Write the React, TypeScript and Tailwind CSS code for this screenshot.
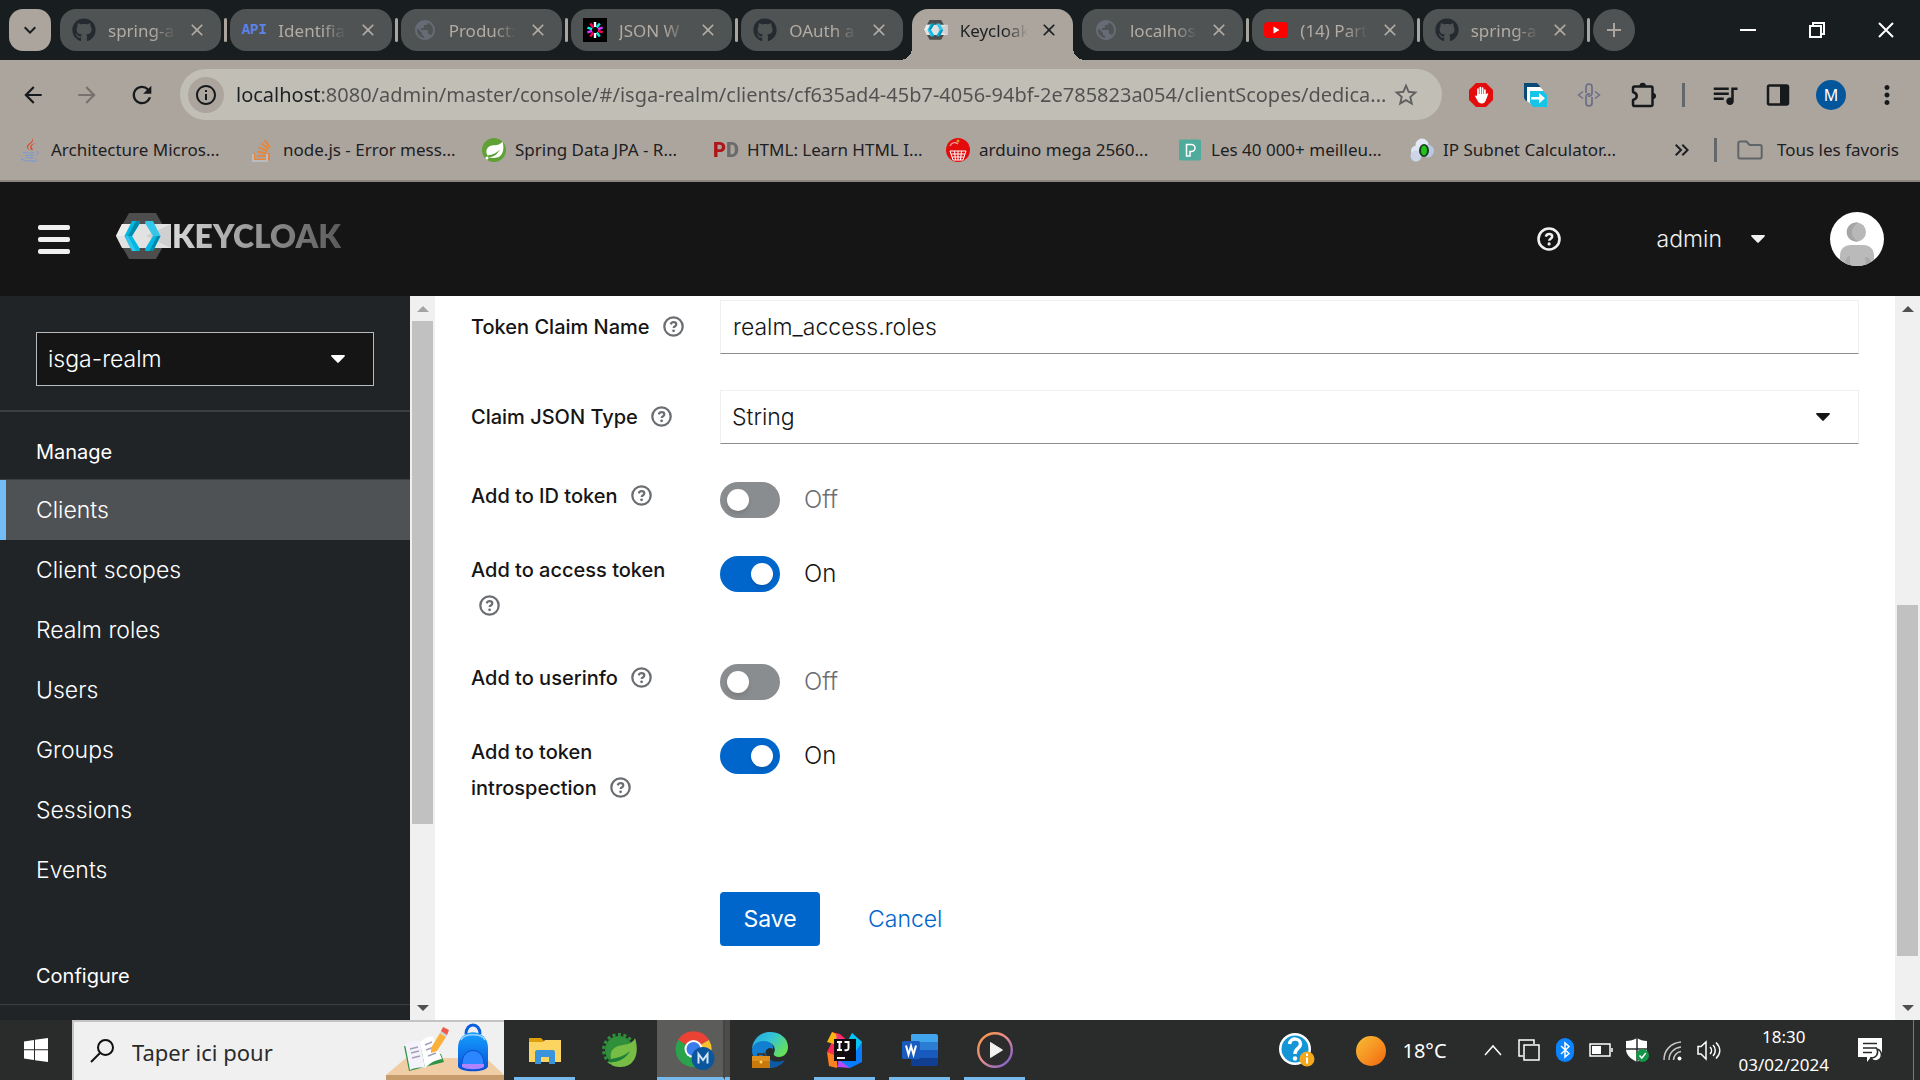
import { useState } from "react";
import type { ReactNode } from "react";
import { FaGithub, FaJava, FaStackOverflow } from "react-icons/fa";
import {
  MdArrowBack,
  MdArrowForward,
  MdRefresh,
  MdStarOutline,
  MdInfoOutline,
  MdQueueMusic,
  MdMoreVert,
  MdPublic,
  MdClose,
  MdAdd,
  MdKeyboardArrowDown,
  MdKeyboardDoubleArrowRight,
} from "react-icons/md";

const SYSTEM = "font-['Noto_Sans','Open_Sans',sans-serif]";
const CONSOLE = "font-['Inter','Liberation_Sans',sans-serif]";

function KeycloakMark({ className }: { className: string }) {
  return (
    <svg viewBox="0 0 56 46" className={className} aria-hidden="true">
      <path d="M13 0H40L53 23 40 46H13L0 23Z" fill="#4d4d4d" />
      <path d="M6 11H55V35H6L0 23Z" fill="#e2e2e2" />
      <path d="M30 23L55 11V35Z" fill="#d0d0d0" />
      <path d="M6 11H20L12 23H0Z" fill="#ededed" />
      <path d="M16 8H23.500L24 10 16 23H8.500Z" fill="#00b8e3" />
      <path d="M8.500 23H16L24 36 23.500 38H16Z" fill="#00b8e3" />
      <path d="M23.500 8L24 10 16 23 12 23 20 8Z" fill="#008aaa" />
      <path d="M8.500 23H12L20 38H16Z" fill="#33c6e9" />
      <path d="M29.500 8H37L44.500 23H37L29 10Z" fill="#33c6e9" />
      <path d="M37 23H44.500L37 38H29.500L29 36Z" fill="#00b8e3" />
      <path d="M41 23H44.500L37 38H33.500Z" fill="#008aaa" />
    </svg>
  );
}

function JwtIcon() {
  const colors = ["#fff", "#00f2e6", "#d63aff", "#fb015b", "#00f2e6", "#fff", "#fb015b", "#d63aff", "#00f2e6", "#fb015b"];
  return (
    <svg viewBox="0 0 24 24" className="size-6 bg-black" aria-hidden="true">
      {colors.map((c, i) => (
        <path key={i} d="M12 4v5" stroke={c} strokeWidth="2.400" transform={`rotate(${i * 36} 12 12)`} />
      ))}
    </svg>
  );
}

function YoutubeIcon() {
  return (
    <svg viewBox="0 0 24 24" className="size-6" aria-hidden="true">
      <rect x="0" y="4" width="24" height="16" rx="4" fill="#f00" />
      <path d="M9.500 8.500v7l6-3.500z" fill="#fff" />
    </svg>
  );
}

function ApiIcon() {
  return <span className="font-['Liberation_Mono',monospace] text-sm leading-6 font-bold text-[#5b84e8]">API</span>;
}

type TabInfo = { title: string; icon: ReactNode; active?: boolean };

const github = <FaGithub className="size-6 text-[#242a30]" />;
const globe = <MdPublic className="size-6 text-[#666b75]" />;

const tabs: TabInfo[] = [
  { title: "spring-a", icon: github },
  { title: "Identifia", icon: <ApiIcon /> },
  { title: "Product:", icon: globe },
  { title: "JSON W", icon: <JwtIcon /> },
  { title: "OAuth a", icon: github },
  { title: "Keycloak", icon: <KeycloakMark className="w-6" />, active: true },
  { title: "localhos", icon: globe },
  { title: "(14) Part", icon: <YoutubeIcon /> },
  { title: "spring-a", icon: github },
];

function Tab({ title, icon, active }: TabInfo) {
  return (
    <div
      className={
        active
          ? "relative flex h-[51px] min-w-0 flex-1 items-center self-end rounded-t-2xl bg-[#aca59d] pb-[9px] text-[#1d2023]"
          : "flex h-[42px] min-w-0 flex-1 items-center rounded-2xl bg-[#505353] text-[#b3aca4]"
      }
    >
      {active && (
        <>
          <span className="absolute bottom-0 -left-3 size-3 bg-[radial-gradient(circle_at_0_0,transparent_12px,#aca59d_12px)]" />
          <span className="absolute -right-3 bottom-0 size-3 bg-[radial-gradient(circle_at_100%_0,transparent_12px,#aca59d_12px)]" />
        </>
      )}
      <button type="button" className="flex min-w-0 flex-1 items-center gap-3 pl-3 text-left">
        <span className="flex w-6 shrink-0 justify-center">{icon}</span>
        <span className="w-[68px] overflow-hidden [mask-image:linear-gradient(90deg,#000_66%,transparent)] pt-0.5 text-[17px] leading-6 whitespace-nowrap">
          {title}
        </span>
      </button>
      <button type="button" aria-label={`Fermer ${title}`} className="mr-3.5">
        <MdClose className="size-5" />
      </button>
    </div>
  );
}

function TabStrip() {
  return (
    <div className="flex h-[60px] items-center bg-[#181e20] pl-[9px]">
      <button
        type="button"
        aria-label="Rechercher dans les onglets"
        className="mr-[9px] flex size-[42px] shrink-0 items-center justify-center rounded-[14px] bg-[#aca59d] text-[#181e20]"
      >
        <MdKeyboardArrowDown className="size-6" />
      </button>
      <div className="flex h-[60px] max-w-[1524px] flex-1 items-center">
        {tabs.map((tab, i) => {
          const plain = i === 0 || tab.active || tabs[i - 1].active;
          return [
            i > 0 && (
              <span key={`s${i}`} className={plain ? "w-[9px] shrink-0" : "mx-[3px] h-6 w-[3px] shrink-0 rounded-full bg-[#aca59d]"} />
            ),
            <Tab key={i} {...tab} />,
          ];
        })}
      </div>
      <span className="mx-[3px] h-6 w-[3px] shrink-0 rounded-full bg-[#aca59d]" />
      <button
        type="button"
        aria-label="Nouvel onglet"
        className="flex size-[42px] shrink-0 items-center justify-center rounded-full bg-[#505353] text-[#aca59d]"
      >
        <MdAdd className="size-6" />
      </button>
      <div className="ml-auto flex text-white">
        <button type="button" aria-label="Réduire" className="flex w-[69px] justify-center">
          <svg viewBox="0 0 16 16" className="size-4" stroke="currentColor" strokeWidth="2" aria-hidden="true">
            <path d="M0 8h16" />
          </svg>
        </button>
        <button type="button" aria-label="Restaurer" className="flex w-[69px] justify-center">
          <svg viewBox="0 0 16 16" className="size-4" fill="none" stroke="currentColor" strokeWidth="2" aria-hidden="true">
            <path d="M1 4h11v11H1zM4 4V1h11v11h-3" />
          </svg>
        </button>
        <button type="button" aria-label="Fermer" className="flex w-[69px] justify-center">
          <svg viewBox="0 0 16 16" className="size-4" stroke="currentColor" strokeWidth="2" aria-hidden="true">
            <path d="M1 1l14 14M15 1L1 15" />
          </svg>
        </button>
      </div>
    </div>
  );
}

function StopHand() {
  return (
    <svg viewBox="0 0 24 24" className="size-6" aria-hidden="true">
      <path d="M7 0h10l7 7v10l-7 7H7l-7-7V7z" fill="#e40d0d" />
      <path
        d="M9 13V6M11.300 12V4.500M13.600 12V5M15.900 13V7"
        stroke="#fff"
        strokeWidth="1.700"
        strokeLinecap="round"
      />
      <path d="M8.200 11h8.600l1.700-.8c.8 0 .8.8.5 1.500L16.500 18c-.8 1.700-2 2.500-3.500 2.500-2.300 0-3.500-1-4.300-2.500l-2.500-4.500c-.4-1 .7-1.500 2-.5z" fill="#fff" />
    </svg>
  );
}

function ShareArrow() {
  return (
    <svg viewBox="0 0 24 24" className="size-6" aria-hidden="true">
      <path d="M1 0h13l3 3v2H5v13H3l-2-3z" fill="#0a4a77" />
      <path d="M4 4h13l3 3v5H8v9l-4-3z" fill="#fff" />
      <path d="M7 8h13l4 4v12H10l-3-4z" fill="#14c5e8" />
      <path d="M8 14h8v-4l6 5.200-6 5.200v-4H8z" fill="#fff" />
    </svg>
  );
}

function ChainIcon() {
  return (
    <svg viewBox="0 0 24 24" className="size-6" fill="none" stroke="#6b6d86" strokeWidth="1.700" aria-hidden="true">
      <path d="M9 10V4a3 3 0 0 1 6 0v6a3 3 0 0 1-4 3" />
      <path d="M15 14v6a3 3 0 0 1-6 0v-6a3 3 0 0 1 4-3" />
      <path d="M6 8.500L1.500 12 6 15.500M18 8.500l4.500 3.500-4.500 3.500" strokeWidth="1.400" />
    </svg>
  );
}

function PuzzleIcon() {
  return (
    <svg viewBox="0 0 26 26" className="size-[26px]" aria-hidden="true">
      <path
        d="M3.500 4.500H20a1.500 1.500 0 0 1 1.500 1.500v16.500a1.500 1.500 0 0 1-1.500 1.500H3a1.500 1.500 0 0 1-1-1.500v-4.500c5-1.500 5-6.500 0-8V6a1.500 1.500 0 0 1 1.500-1.500z"
        fill="none"
        stroke="currentColor"
        strokeWidth="2.500"
        strokeLinejoin="round"
      />
      <path d="M8.500 4a3.200 3.200 0 0 1 6.400 0zM22 11a3 3 0 0 1 0 6z" fill="currentColor" />
    </svg>
  );
}

function SidePanelIcon() {
  return (
    <svg viewBox="0 0 24 24" className="size-6" aria-hidden="true">
      <rect x="2" y="2.500" width="20" height="19" rx="1.500" fill="none" stroke="#171a1c" strokeWidth="2.500" />
      <path d="M14 2h8v20h-8z" fill="#171a1c" />
    </svg>
  );
}

function Toolbar() {
  return (
    <div className="flex h-[69px] items-center bg-[#aca59d] pr-[18px] pl-5 text-[#171a1c]">
      <div className="flex w-40 shrink-0 items-center gap-7">
        <button type="button" aria-label="Retour">
          <MdArrowBack className="size-[26px]" />
        </button>
        <button type="button" aria-label="Avancer" className="text-[#77726d]">
          <MdArrowForward className="size-[26px]" />
        </button>
        <button type="button" aria-label="Actualiser">
          <MdRefresh className="size-7" />
        </button>
      </div>
      <div className="flex h-[51px] min-w-0 flex-1 items-center rounded-full bg-[#c1beb6] pr-[22px] pl-2">
        <button
          type="button"
          aria-label="Informations sur le site"
          className="flex size-9 shrink-0 items-center justify-center rounded-full bg-[#aca59d]"
        >
          <MdInfoOutline className="size-6" />
        </button>
        <input
          type="text"
          aria-label="Adresse"
          readOnly
          value="localhost:8080/admin/master/console/#/isga-realm/clients/cf635ad4-45b7-4056-94bf-2e785823a054/clientScopes/dedica..."
          className="ml-3 min-w-0 flex-1 bg-[linear-gradient(90deg,#1d2023_84px,#50504f_84px)] bg-clip-text text-xl text-transparent outline-none"
        />
        <button type="button" aria-label="Ajouter aux favoris" className="text-[#5f6060]">
          <MdStarOutline className="size-7" />
        </button>
      </div>
      <div className="ml-[27px] flex shrink-0 items-center gap-[30px]">
        <button type="button" aria-label="Bloqueur de publicité"><StopHand /></button>
        <button type="button" aria-label="Partager la page"><ShareArrow /></button>
        <button type="button" aria-label="Liens"><ChainIcon /></button>
        <button type="button" aria-label="Extensions"><PuzzleIcon /></button>
      </div>
      <span className="mx-[25px] h-6 w-[3px] shrink-0 bg-[#62686a]" />
      <div className="flex shrink-0 items-center gap-[26px]">
        <button type="button" aria-label="Commandes multimédias"><MdQueueMusic className="size-[30px]" /></button>
        <button type="button" aria-label="Panneau latéral"><SidePanelIcon /></button>
        <button type="button" aria-label="Profil M" className="flex size-[30px] items-center justify-center rounded-full bg-[#02569c] text-base text-white">
          M
        </button>
        <button type="button" aria-label="Menu"><MdMoreVert className="size-[30px]" /></button>
      </div>
    </div>
  );
}

function SpringLeaf() {
  return (
    <svg viewBox="0 0 24 24" className="size-6" aria-hidden="true">
      <circle cx="12" cy="12" r="12" fill="#5fa134" />
      <path d="M20.500 3.500c1.500 5 1.500 12-3 15-3.500 2.200-8 1.200-12 1 6 .3 10-3.500 12.500-8C14.500 15 11 16.500 5.500 17.500 2.500 12 6 8 10 7.500c4.500-.5 8-.5 10.500-4z" fill="#fff" />
      <circle cx="5" cy="20" r="1.500" fill="#fff" />
    </svg>
  );
}

function PdIcon() {
  return (
    <span className="bg-[linear-gradient(90deg,#b0151b_50%,#6b6b6b_50%)] bg-clip-text font-['Roboto',sans-serif] text-xl leading-6 font-black text-transparent">
      PD
    </span>
  );
}

function CherryIcon() {
  return (
    <svg viewBox="0 0 24 24" className="size-6" aria-hidden="true">
      <circle cx="12" cy="12" r="12" fill="#e30b0b" />
      <path d="M4 13h16l-3 9H7zM8.500 13l1 9M12 13v9M15.500 13l-1 9M5 16h14M6 19h12" fill="none" stroke="#fff" strokeWidth="1" />
      <path d="M4 8c2-4 5-4 8-2" fill="none" stroke="#f8a5a5" strokeWidth="1.200" />
      <circle cx="12" cy="3" r="1.500" fill="#c9a52c" />
    </svg>
  );
}

function PexelsIcon() {
  return (
    <svg viewBox="0 0 24 24" className="size-6" aria-hidden="true">
      <rect x="1" y="1.500" width="22" height="21" rx="2" fill="#4fab9c" />
      <path d="M8.500 18V6.500h5a3.500 3.500 0 0 1 0 7h-1.500V18z" fill="none" stroke="#fff" strokeWidth="1.500" />
    </svg>
  );
}

function SubnetIcon() {
  return (
    <svg viewBox="0 0 24 24" className="size-6" aria-hidden="true">
      <circle cx="12" cy="7" r="6.500" fill="#e3eaf7" />
      <circle cx="17.500" cy="13" r="6.500" fill="#b9c8e4" />
      <circle cx="6.500" cy="13" r="5.500" fill="#dfe7f5" />
      <circle cx="6" cy="18" r="5.500" fill="#ccd6e8" />
      <ellipse cx="14" cy="12.500" rx="5" ry="6.500" fill="#1b3a1e" />
      <ellipse cx="14" cy="12.500" rx="3" ry="5" fill="#22c31c" />
    </svg>
  );
}

function StackIcon() {
  return (
    <span className="relative flex">
      <FaStackOverflow className="size-6 text-[#e8853a]" />
      <span className="absolute bottom-0 left-0.5 h-2 w-4 border-2 border-t-0 border-[#b9bdc0]" />
    </span>
  );
}

const bookmarks: { title: string; icon: ReactNode }[] = [
  {
    title: "Architecture Micros...",
    icon: <FaJava className="size-6 [&_path]:fill-[url(#java-tone)]" />,
  },
  { title: "node.js - Error mess...", icon: <StackIcon /> },
  { title: "Spring Data JPA - R...", icon: <SpringLeaf /> },
  { title: "HTML: Learn HTML I...", icon: <PdIcon /> },
  { title: "arduino mega 2560...", icon: <CherryIcon /> },
  { title: "Les 40 000+ meilleu...", icon: <PexelsIcon /> },
  { title: "IP Subnet Calculator...", icon: <SubnetIcon /> },
];

function BookmarkBar() {
  return (
    <div className="flex h-[53px] items-center border-b-2 border-[#8a857f] bg-[#aca59d] pr-[21px] pb-2.5 pl-[18px] text-[17px] text-[#1d2023]">
      <svg className="size-0" aria-hidden="true">
        <linearGradient id="java-tone" x1="0" y1="0" x2="0" y2="1">
          <stop offset="0.52" stopColor="#d9472b" />
          <stop offset="0.52" stopColor="#7196d8" />
        </linearGradient>
      </svg>
      {bookmarks.map((b) => (
        <a key={b.title} href="#" className="flex w-[232px] items-center gap-[9px] whitespace-nowrap">
          <span className="flex w-6 shrink-0 justify-center">{b.icon}</span>
          {b.title}
        </a>
      ))}
      <div className="ml-auto flex items-center whitespace-nowrap">
        <button type="button" aria-label="Autres favoris">
          <MdKeyboardDoubleArrowRight className="size-6" />
        </button>
        <span className="mx-5 h-6 w-[3px] bg-[#62686a]" />
        <button type="button" className="flex items-center gap-3.5">
          <svg viewBox="0 0 26 20" className="w-[26px] text-[#5f6568]" aria-hidden="true">
            <path
              d="M3 1.500h6.500l3 3.500H23a1.700 1.700 0 0 1 1.700 1.700v10A1.700 1.700 0 0 1 23 18.500H3a1.700 1.700 0 0 1-1.700-1.700V3.200A1.700 1.700 0 0 1 3 1.500z"
              fill="none"
              stroke="currentColor"
              strokeWidth="2"
            />
          </svg>
          Tous les favoris
        </button>
      </div>
    </div>
  );
}

function HelpGlyph({ className }: { className: string }) {
  return (
    <svg viewBox="0 0 24 24" className={className} fill="none" stroke="currentColor" aria-hidden="true">
      <circle cx="12" cy="12" r="10.500" strokeWidth="2.600" />
      <path d="M8.800 9.600c.5-1.700 1.700-2.500 3.300-2.500 1.800 0 3.100 1 3.100 2.500 0 2.200-3 2-3 4.200" strokeWidth="2.500" />
      <circle cx="12.100" cy="16.900" r="1.600" fill="currentColor" stroke="none" />
    </svg>
  );
}

function Caret({ className }: { className: string }) {
  return (
    <svg viewBox="0 0 14 8" className={className} aria-hidden="true">
      <path d="M1 0h12c.9 0 1.200 1 .6 1.500L7.700 7.600c-.4.4-1 .4-1.400 0L.4 1.500C-.2 1 .1 0 1 0z" fill="currentColor" />
    </svg>
  );
}

function Masthead() {
  return (
    <header className="flex h-[114px] shrink-0 items-center bg-[#151515] pr-9 pl-[38px] text-[#f0f0f0]">
      <button type="button" aria-label="Global navigation" className="flex w-8 flex-col gap-[7px]">
        <span className="h-[5px] rounded-xs bg-[#f0f0f0]" />
        <span className="h-[5px] rounded-xs bg-[#f0f0f0]" />
        <span className="h-[5px] rounded-xs bg-[#f0f0f0]" />
      </button>
      <a href="#" aria-label="Keycloak" className="ml-[46px] flex items-center pb-1.5">
        <KeycloakMark className="w-14" />
        <span className="bg-linear-to-r from-[#d8d8d8] to-[#5a5a5a] bg-clip-text font-['Lato',sans-serif] text-[32px] leading-10 font-extrabold text-transparent">
          KEYCLOAK
        </span>
      </a>
      <button type="button" aria-label="Help" className="ml-auto">
        <HelpGlyph className="size-6" />
      </button>
      <button type="button" className="ml-24 flex items-center gap-[29px] text-[23px] font-light">
        admin
        <Caret className="w-3.5" />
      </button>
      <svg viewBox="0 0 54 54" className="ml-[65px] size-[54px] rounded-full bg-white" role="img" aria-label="Avatar">
        <circle cx="26.500" cy="20" r="9.500" fill="#b8b8b8" />
        <path d="M26.500 10.500a9.500 9.500 0 1 0 2 18.700C20 27 20 14 28.500 10.800z" fill="#a5a5a5" />
        <path d="M10 54V44c0-7 4-11 11-11h12c7 0 11 4 11 11v10z" fill="#bababa" />
        <path d="M15 54c0-6 1-9 5-10v10zM35 45c5 0 6 3 6 9h-5z" fill="#a9a9a9" />
      </svg>
    </header>
  );
}

function Arrow({ up, muted }: { up?: boolean; muted?: boolean }) {
  return (
    <div className={muted ? "flex h-[25px] items-center justify-center text-[#a3a3a3]" : "flex h-[25px] items-center justify-center text-[#505050]"}>
      <svg viewBox="0 0 12 6" className="w-3" aria-hidden="true">
        <path d={up ? "M6 0l6 6H0z" : "M0 0h12L6 6z"} fill="currentColor" />
      </svg>
    </div>
  );
}

const manageItems = ["Clients", "Client scopes", "Realm roles", "Users", "Groups", "Sessions", "Events"];

function Sidebar() {
  return (
    <div className="flex w-[435px] shrink-0">
      <nav aria-label="Global" className="flex-1 bg-[#212427] text-[23px] text-white">
        <div className="border-b-2 border-[#3c3f42] px-9 pt-9 pb-6">
          <div className="relative">
            <select
              aria-label="Realm"
              defaultValue="isga-realm"
              className="h-[54px] w-full appearance-none border border-[#b8bbbe] bg-[#151515] px-[11px] font-light text-white"
            >
              <option>isga-realm</option>
            </select>
            <Caret className="pointer-events-none absolute top-[23px] right-[29px] w-3.5" />
          </div>
        </div>
        <h2 className="flex h-[68px] items-center border-b border-[#3c3f42] px-9 pt-3 text-xl">Manage</h2>
        <ul className="font-light">
          {manageItems.map((item) => (
            <li key={item}>
              <a
                href="#"
                className={
                  item === "Clients"
                    ? "flex h-[60px] items-center border-l-6 border-[#73bcf7] bg-[#4f5255] pl-[30px]"
                    : "flex h-[60px] items-center pl-9"
                }
              >
                {item}
              </a>
            </li>
          ))}
        </ul>
        <h2 className="mt-9 flex h-[69px] items-center border-b border-[#3c3f42] px-9 pt-3 text-xl">Configure</h2>
      </nav>
      <div className="flex w-[25px] flex-col bg-[#f0f0f0]" aria-hidden="true">
        <Arrow up muted />
        <div className="mx-0.5 grow-[503] bg-[#c1c1c1]" />
        <div className="grow-[171]" />
        <Arrow />
      </div>
    </div>
  );
}

function FieldLabel({ htmlFor, text }: { htmlFor: string; text: string }) {
  return (
    <div className="pr-6 text-xl leading-9 font-medium text-[#151515]">
      <label htmlFor={htmlFor}>{text}</label>{" "}
      <button type="button" aria-label={`Help for ${text}`} className="ml-2 inline-block align-[-3px] text-[#6a6e73]">
        <HelpGlyph className="size-[21px]" />
      </button>
    </div>
  );
}

function ToggleRow({ id, label, initial }: { id: string; label: string; initial: boolean }) {
  const [on, setOn] = useState(initial);
  return (
    <div className="grid min-h-[74px] grid-cols-[249px_1fr] items-start">
      <div className="pb-9">
        <FieldLabel htmlFor={id} text={label} />
      </div>
      <div className="flex items-center gap-6 pt-1">
        <input
          id={id}
          type="checkbox"
          role="switch"
          checked={on}
          onChange={(e) => setOn(e.target.checked)}
          className="flex h-9 w-[60px] appearance-none items-center rounded-full bg-[#8a8d90] px-[7px] before:size-[22px] before:rounded-full before:bg-white before:shadow-md checked:justify-end checked:bg-[#0066cc]"
        />
        <span className={on ? "text-2xl leading-9 font-light text-[#151515]" : "text-2xl leading-9 font-light text-[#6a6e73]"}>{on ? "On" : "Off"}</span>
      </div>
    </div>
  );
}

function MapperForm() {
  return (
    <form className="min-w-0 flex-1 bg-white pt-1 pr-9 pl-9" onSubmit={(e) => e.preventDefault()}>
      <div className="mb-9 grid grid-cols-[249px_1fr] items-center">
        <FieldLabel htmlFor="claim-name" text="Token Claim Name" />
        <input
          id="claim-name"
          type="text"
          defaultValue="realm_access.roles"
          className="h-[54px] w-full border border-[#f0f0f0] border-b-[#8a8d90] px-3 text-[23px] font-light text-[#151515]"
        />
      </div>
      <div className="mb-[34px] grid grid-cols-[249px_1fr] items-center">
        <FieldLabel htmlFor="claim-type" text="Claim JSON Type" />
        <div className="relative">
          <select
            id="claim-type"
            defaultValue="String"
            className="h-[54px] w-full appearance-none border border-[#f0f0f0] border-b-[#8a8d90] bg-white px-[11px] text-[23px] font-light text-[#151515]"
          >
            <option>String</option>
          </select>
          <Caret className="pointer-events-none absolute top-[23px] right-[29px] w-3.5 text-[#151515]" />
        </div>
      </div>
      <ToggleRow id="id-token" label="Add to ID token" initial={false} />
      <ToggleRow id="access-token" label="Add to access token" initial />
      <ToggleRow id="userinfo" label="Add to userinfo" initial={false} />
      <ToggleRow id="introspection" label="Add to token introspection" initial />
      <div className="mt-[50px] ml-[249px] flex items-center gap-6 text-[23px]">
        <button type="submit" className="h-[54px] w-[100px] rounded-[4px] bg-[#0066cc] text-white">
          Save
        </button>
        <button type="button" className="h-[54px] px-6 font-light text-[#0066cc]">
          Cancel
        </button>
      </div>
    </form>
  );
}

function BackpackArt() {
  return (
    <svg viewBox="0 0 118 58" className="h-[58px] w-[118px] shrink-0" aria-hidden="true">
      <defs>
        <linearGradient id="bag" x1="0" y1="0" x2="0" y2="1">
          <stop offset="0" stopColor="#17a0ff" />
          <stop offset="1" stopColor="#0550d8" />
        </linearGradient>
      </defs>
      <path d="M20 36H100L118 53H0z" fill="#f0cda5" />
      <path d="M0 53h118v5H0z" fill="#c69c6d" />
      <path d="M18 24l5 25 35-9-3-8z" fill="#2f9447" />
      <path d="M19 22c5-4 10-4 15-2l5 26c-6-1-11 0-15 2z" fill="#f4f2fb" />
      <path d="M34 20c4-4 9-6 13-5l9 22c-7 1-12 4-17 9z" fill="#fff" />
      <path d="M24 27l8-2M25 31l8-2M26 36l8-2M39 23l7-3M40 28l8-3M42 34l8-3" stroke="#a5a0b8" strokeWidth="1.500" />
      <path d="M45 26l9-15 6 4-9 14-6 2z" fill="#fbb03b" />
      <path d="M54 11l2-4 6 4-2 4z" fill="#cdd3dc" />
      <path d="M55 9l2-4 6 3-2 5z" fill="#f15a4a" />
      <path d="M80 12c0-12 14-12 14 0" fill="none" stroke="#0a5fe0" strokeWidth="3" />
      <path d="M72 26c0-21 30-21 30 0v18c0 7-30 7-30 0z" fill="url(#bag)" />
      <path d="M76 42c0-18 22-18 22 0v3H76z" fill="#2b86ff" stroke="#0a4fd0" />
      <path d="M76 42h22v3c-5 3-17 3-22 0z" fill="#b184ff" />
      <path d="M75 18c3-7 21-7 24 0" fill="none" stroke="#9cd3ff" strokeWidth="1.500" />
    </svg>
  );
}

const ExplorerIcon = (
  <svg viewBox="0 0 36 36" className="size-9" aria-hidden="true">
    <path d="M2 6h12l3 3v5H2z" fill="#dd9f0c" />
    <path d="M2 10h14l2-2h16v22H2z" fill="#fcd462" />
    <path d="M8 20c0-1 1-2 2-2h16c1 0 2 1 2 2v12h-6v-7h-8v7H8z" fill="#3a94dc" />
  </svg>
);

const SpringToolIcon = (
  <svg viewBox="0 0 36 36" className="size-9" aria-hidden="true">
    <circle cx="17" cy="18" r="14" fill="#2f8f3a" />
    <circle cx="17" cy="18" r="15.500" fill="none" stroke="#2f8f3a" strokeWidth="3" strokeDasharray="3 2.500" />
    <path d="M33 6c4 12 2 28-14 29-6 0-10-2-13-5 9 1 18-3 22-11-6 5-13 7-19 8-2-10 5-13 12-14 6-1 10-2 12-7z" fill="#77bd45" />
    <path d="M6 30c9 1 17-3 22-11-5 6-13 8-20 8z" fill="#1d7d37" />
  </svg>
);

const ChromeIcon = (
  <svg viewBox="0 0 40 40" className="size-10" aria-hidden="true">
    <path d="M18 19L3 10a18 18 0 0 1 31 0z" fill="#ea4335" />
    <path d="M18 19L34 10a18 18 0 0 1-16 27z" fill="#fbc02d" />
    <path d="M18 19l3 18A18 18 0 0 1 3 10z" fill="#2ba24c" />
    <circle cx="18.500" cy="19" r="9" fill="#fff" />
    <circle cx="18.500" cy="19" r="7" fill="#3b7ded" />
    <circle cx="28" cy="28.500" r="11.500" fill="#0b569c" />
    <path d="M23.500 33.500V24l4.500 6 4.500-6v9.500" fill="none" stroke="#d3e5f5" strokeWidth="2" />
  </svg>
);

const EdgeIcon = (
  <svg viewBox="0 0 36 36" className="size-9" aria-hidden="true">
    <defs>
      <linearGradient id="edge-top" x1="0" y1="0" x2="1" y2="0.600">
        <stop offset="0" stopColor="#1ea7e4" />
        <stop offset="0.5" stopColor="#35c3d6" />
        <stop offset="1" stopColor="#66e05a" />
      </linearGradient>
    </defs>
    <path d="M0 18C0 8 8 0 18 0s18 6 18 15c0 6-4 10-9 10-4 0-6-2-5-4 3-7-3-11-9-11C7 10 0 14 0 18z" fill="url(#edge-top)" />
    <path d="M0 18c1-7 7-9 12-9 6 0 10 4 9 8-5-3-9 2-7 7 2 6 10 9 18 5-6 8-20 10-27 1C1 26 0 22 0 18z" fill="#127fd2" />
    <path d="M14 20c0 8 9 12 19 8-5 8-17 10-23 5-3-3-1-10 4-13z" fill="#0c59a4" />
    <path d="M0 24h18v12H0z" fill="#c9780c" />
    <path d="M0 24h18v5H0z" fill="#dd8f1d" />
    <path d="M6 24v-2h6v2" fill="none" stroke="#4a2b0c" strokeWidth="1.500" />
    <circle cx="9" cy="30" r="1.500" fill="#ffdf5e" />
  </svg>
);

const IdeaIcon = (
  <svg viewBox="0 0 36 36" className="size-9" aria-hidden="true">
    <path d="M5 0l8 2 9 8L12 26 0 20l4-8z" fill="#fe2857" />
    <path d="M5 0l6 3-4 9-7-2z" fill="#fdb60d" />
    <path d="M0 20l10 4v12l-8-2z" fill="#fc801d" />
    <path d="M9 2l10 6 2 10-10-4z" fill="#f0348b" />
    <path d="M25 1l10 9v20l-12 6-13-6 12-12z" fill="#087cfa" />
    <path d="M25 1l10 9-6 9-9-9z" fill="#07c3f2" />
    <path d="M12 28l11 8-13-1z" fill="#b74af7" />
    <rect x="7" y="7" width="22" height="22" fill="#100c10" />
    <path d="M10 10h5M12.500 10v8M10 18h5M17.500 10h4v6c0 2-1 2.500-4 2" fill="none" stroke="#fff" strokeWidth="2" />
    <path d="M10 26h8" stroke="#fff" strokeWidth="2" />
  </svg>
);

const WordIcon = (
  <svg viewBox="0 0 36 36" className="size-9" aria-hidden="true">
    <path d="M10 2h24c1 0 2 1 2 2v6H9V3z" fill="#41a5ee" />
    <path d="M9 10h27v8H9z" fill="#2b7cd3" />
    <path d="M9 18h27v8H9z" fill="#185abd" />
    <path d="M9 26h27v6c0 1-1 2-2 2H11c-1 0-2-1-2-2z" fill="#103f91" />
    <rect x="0" y="9" width="18" height="18" rx="1.500" fill="#185abd" />
    <path d="M4 13.500l2.500 9L9 14l2.500 8.500 2.500-9" fill="none" stroke="#fff" strokeWidth="2" />
  </svg>
);

const PlayerIcon = (
  <svg viewBox="0 0 36 36" className="size-9" aria-hidden="true">
    <defs>
      <linearGradient id="ring" x1="0" y1="0" x2="1" y2="1">
        <stop offset="0" stopColor="#ff9a3c" />
        <stop offset="0.5" stopColor="#e08a92" />
        <stop offset="1" stopColor="#6f5ad8" />
      </linearGradient>
    </defs>
    <circle cx="18" cy="18" r="16.800" fill="#2c2c2c" stroke="url(#ring)" strokeWidth="2.400" />
    <path d="M13.500 10.500l12 7.500-12 7.500z" fill="#f2f2f2" stroke="#f2f2f2" strokeLinejoin="round" />
  </svg>
);

const apps: { name: string; icon: ReactNode; open: boolean; current?: boolean }[] = [
  { name: "Explorateur de fichiers", icon: ExplorerIcon, open: true },
  { name: "Spring Tool Suite", icon: SpringToolIcon, open: false },
  { name: "Google Chrome", icon: ChromeIcon, open: true, current: true },
  { name: "Microsoft Edge", icon: EdgeIcon, open: false },
  { name: "IntelliJ IDEA", icon: IdeaIcon, open: true },
  { name: "Word", icon: WordIcon, open: true },
  { name: "Lecteur multimédia", icon: PlayerIcon, open: true },
];

function AppButton({ name, icon, open, current }: (typeof apps)[number]) {
  if (current) {
    return (
      <button type="button" aria-label={name} className="flex h-full w-[75px]">
        <span className="flex h-full w-[68px] items-center justify-center border-r-2 border-b-3 border-r-[#454545] border-b-[#76b9ed] bg-[#5c5c5b] pt-[3px] pl-[10px]">
          {icon}
        </span>
        <span className="h-full w-[5px] border-b-3 border-[#76b9ed] bg-[#4b4b4a]" />
      </button>
    );
  }
  return (
    <button type="button" aria-label={name} className="flex h-full w-[75px] justify-center">
      <span className={open ? "flex h-full w-[61px] items-center justify-center border-b-3 border-[#76b9ed] pt-[3px]" : "flex h-full w-[61px] items-center justify-center"}>
        {icon}
      </span>
    </button>
  );
}

function Tray() {
  return (
    <div className="ml-auto flex h-full shrink-0 items-center text-white">
      <button type="button" aria-label="Assistance" className="mr-[41px]">
        <svg viewBox="0 0 36 40" className="h-10 w-9" aria-hidden="true">
          <circle cx="16" cy="19" r="16" fill="#fff" />
          <circle cx="16" cy="19" r="13.500" fill="#1496d6" />
          <path d="M10.500 14c1-7 11-6 11 0 0 5-5.500 4-5.500 10" fill="none" stroke="#fff" strokeWidth="3.500" />
          <circle cx="16" cy="28.500" r="2.200" fill="#fff" />
          <circle cx="28" cy="29" r="7.500" fill="#f3a91d" />
          <path d="M28 27.500v6M28 23.500v2.500" stroke="#fff" strokeWidth="2" />
        </svg>
      </button>
      <button type="button" className="mr-[34px] flex items-center gap-4 pt-0.5 text-xl">
        <span className="size-[30px] rounded-full bg-linear-to-br from-[#f8bd35] to-[#f0660c]" />
        18°C
      </button>
      <div className="flex items-center gap-3">
        <button type="button" aria-label="Afficher les icônes cachées">
          <svg viewBox="0 0 24 24" className="size-6" fill="none" stroke="#fff" strokeWidth="1.500" aria-hidden="true">
            <path d="M4 17l8-9 8 9" />
          </svg>
        </button>
        <button type="button" aria-label="Fenêtres">
          <svg viewBox="0 0 24 24" className="size-6" fill="none" stroke="#fff" strokeWidth="1.500" aria-hidden="true">
            <path d="M6 18H2V2h15v4" />
            <rect x="7" y="7" width="15" height="15" />
          </svg>
        </button>
        <button type="button" aria-label="Bluetooth">
          <svg viewBox="0 0 24 24" className="size-6" aria-hidden="true">
            <rect x="3" y="0" width="18" height="24" rx="9" fill="#0a84ff" />
            <path d="M8 8l8 7.500-4 3.500V5l4 3.500L8 16" fill="none" stroke="#fff" strokeWidth="1.500" />
          </svg>
        </button>
        <button type="button" aria-label="Batterie">
          <svg viewBox="0 0 24 24" className="size-6" fill="none" stroke="#fff" strokeWidth="1.500" aria-hidden="true">
            <rect x="1" y="6" width="20" height="12" />
            <rect x="3" y="8" width="9" height="8" fill="#fff" stroke="none" />
            <path d="M23 10v4" />
          </svg>
        </button>
        <button type="button" aria-label="Sécurité">
          <svg viewBox="0 0 24 24" className="size-6" aria-hidden="true">
            <path d="M12 0c3 2 6 3 10 3v8c0 6-4 10-10 13C6 21 1 17 1 11V3c4 0 8-1 11-3z" fill="#fff" />
            <path d="M12 0v24M1 11h21" stroke="#2a2b2b" strokeWidth="1.500" />
            <circle cx="17.500" cy="17.500" r="6.500" fill="#149447" />
            <path d="M14.500 17.500l2.300 2.500 4-5" fill="none" stroke="#fff" strokeWidth="1.500" />
          </svg>
        </button>
        <button type="button" aria-label="Wi-Fi">
          <svg viewBox="0 0 24 24" className="size-6" fill="none" stroke="#c8c8c8" strokeWidth="1.500" aria-hidden="true">
            <path d="M3 22C3 12 10 5 20 4M8 22c0-7 5-12 12-13M12.500 22c0-4 3-8 7.500-8.500" />
            <circle cx="18.500" cy="20.500" r="2" fill="#fff" stroke="none" />
          </svg>
        </button>
        <button type="button" aria-label="Volume">
          <svg viewBox="0 0 24 24" className="size-6" fill="none" stroke="#fff" strokeWidth="1.500" aria-hidden="true">
            <path d="M1 8.500h3L9 4v17l-5-5H1zM13 9c2 2 2 5 0 7M16 7c3 3 3 8 0 11M19 4.500c5 5 5 11 0 16" />
          </svg>
        </button>
      </div>
      <button type="button" className="ml-[18px] flex flex-col items-center pt-0.5 text-[17px] leading-7">
        <span>18:30</span>
        <span>03/02/2024</span>
      </button>
      <button type="button" aria-label="Notifications" className="ml-7">
        <svg viewBox="0 0 26 26" className="size-[26px]" aria-hidden="true">
          <path d="M1 1h24v19H14l-4 5v-5H1z" fill="#fff" />
          <path d="M6 6.500h14M6 11h14M6 15.500h9" stroke="#2a2b2b" strokeWidth="1.500" />
          <path d="M20 12c6 2 6 11-1 12-3 0-4-1-5-3 5 0 8-4 6-9z" fill="#fff" stroke="#2a2b2b" strokeWidth="1.500" />
        </svg>
      </button>
      <span className="mr-1.5 ml-[30px] h-full w-px bg-[#7a7a7a]" />
    </div>
  );
}

function Taskbar() {
  return (
    <footer className={`flex h-[60px] shrink-0 items-center bg-[#2a2b2b] ${SYSTEM}`}>
      <button type="button" aria-label="Démarrer" className="flex w-[72px] shrink-0 justify-center">
        <svg viewBox="0 0 24 24" className="size-6" fill="#fff" aria-hidden="true">
          <path d="M0 3.500L10 2v9.300H0zM11 1.800L24 0v11.300H11zM0 12.300h10V22L0 20.500zM11 12.300h13V24l-13-1.800z" />
        </svg>
      </button>
      <div className="flex h-full w-[432px] shrink-0 items-center border-2 border-r-0 border-b-0 border-[#c4c4c4] bg-[#f0f0f0] pl-4">
        <svg viewBox="0 0 24 24" className="size-6 shrink-0" fill="none" stroke="#111" strokeWidth="2" aria-hidden="true">
          <circle cx="15.500" cy="8.500" r="7.500" />
          <path d="M10 14L1 23" />
        </svg>
        <input
          type="search"
          aria-label="Rechercher"
          placeholder="Taper ici pour"
          className="mx-[18px] min-w-0 flex-1 pt-0.5 text-[22px] outline-none placeholder:text-[#2b2b2b]"
        />
        <BackpackArt />
      </div>
      <div className="ml-[3px] flex h-full">
        {apps.map((app) => (
          <AppButton key={app.name} {...app} />
        ))}
      </div>
      <Tray />
    </footer>
  );
}

export default function App() {
  return (
    <div className="flex min-h-screen flex-col">
      <div className={`shrink-0 ${SYSTEM}`}>
        <TabStrip />
        <Toolbar />
        <BookmarkBar />
      </div>
      <div className={`flex flex-1 flex-col ${CONSOLE}`}>
        <Masthead />
        <div className="flex flex-1">
          <Sidebar />
          <MapperForm />
          <div className="flex w-[25px] shrink-0 flex-col bg-[#f0f0f0]" aria-hidden="true">
            <Arrow up />
            <div className="grow-[284]" />
            <div className="mx-0.5 grow-[351] bg-[#c1c1c1]" />
            <div className="grow-[39]" />
            <Arrow />
          </div>
        </div>
      </div>
      <Taskbar />
    </div>
  );
}
